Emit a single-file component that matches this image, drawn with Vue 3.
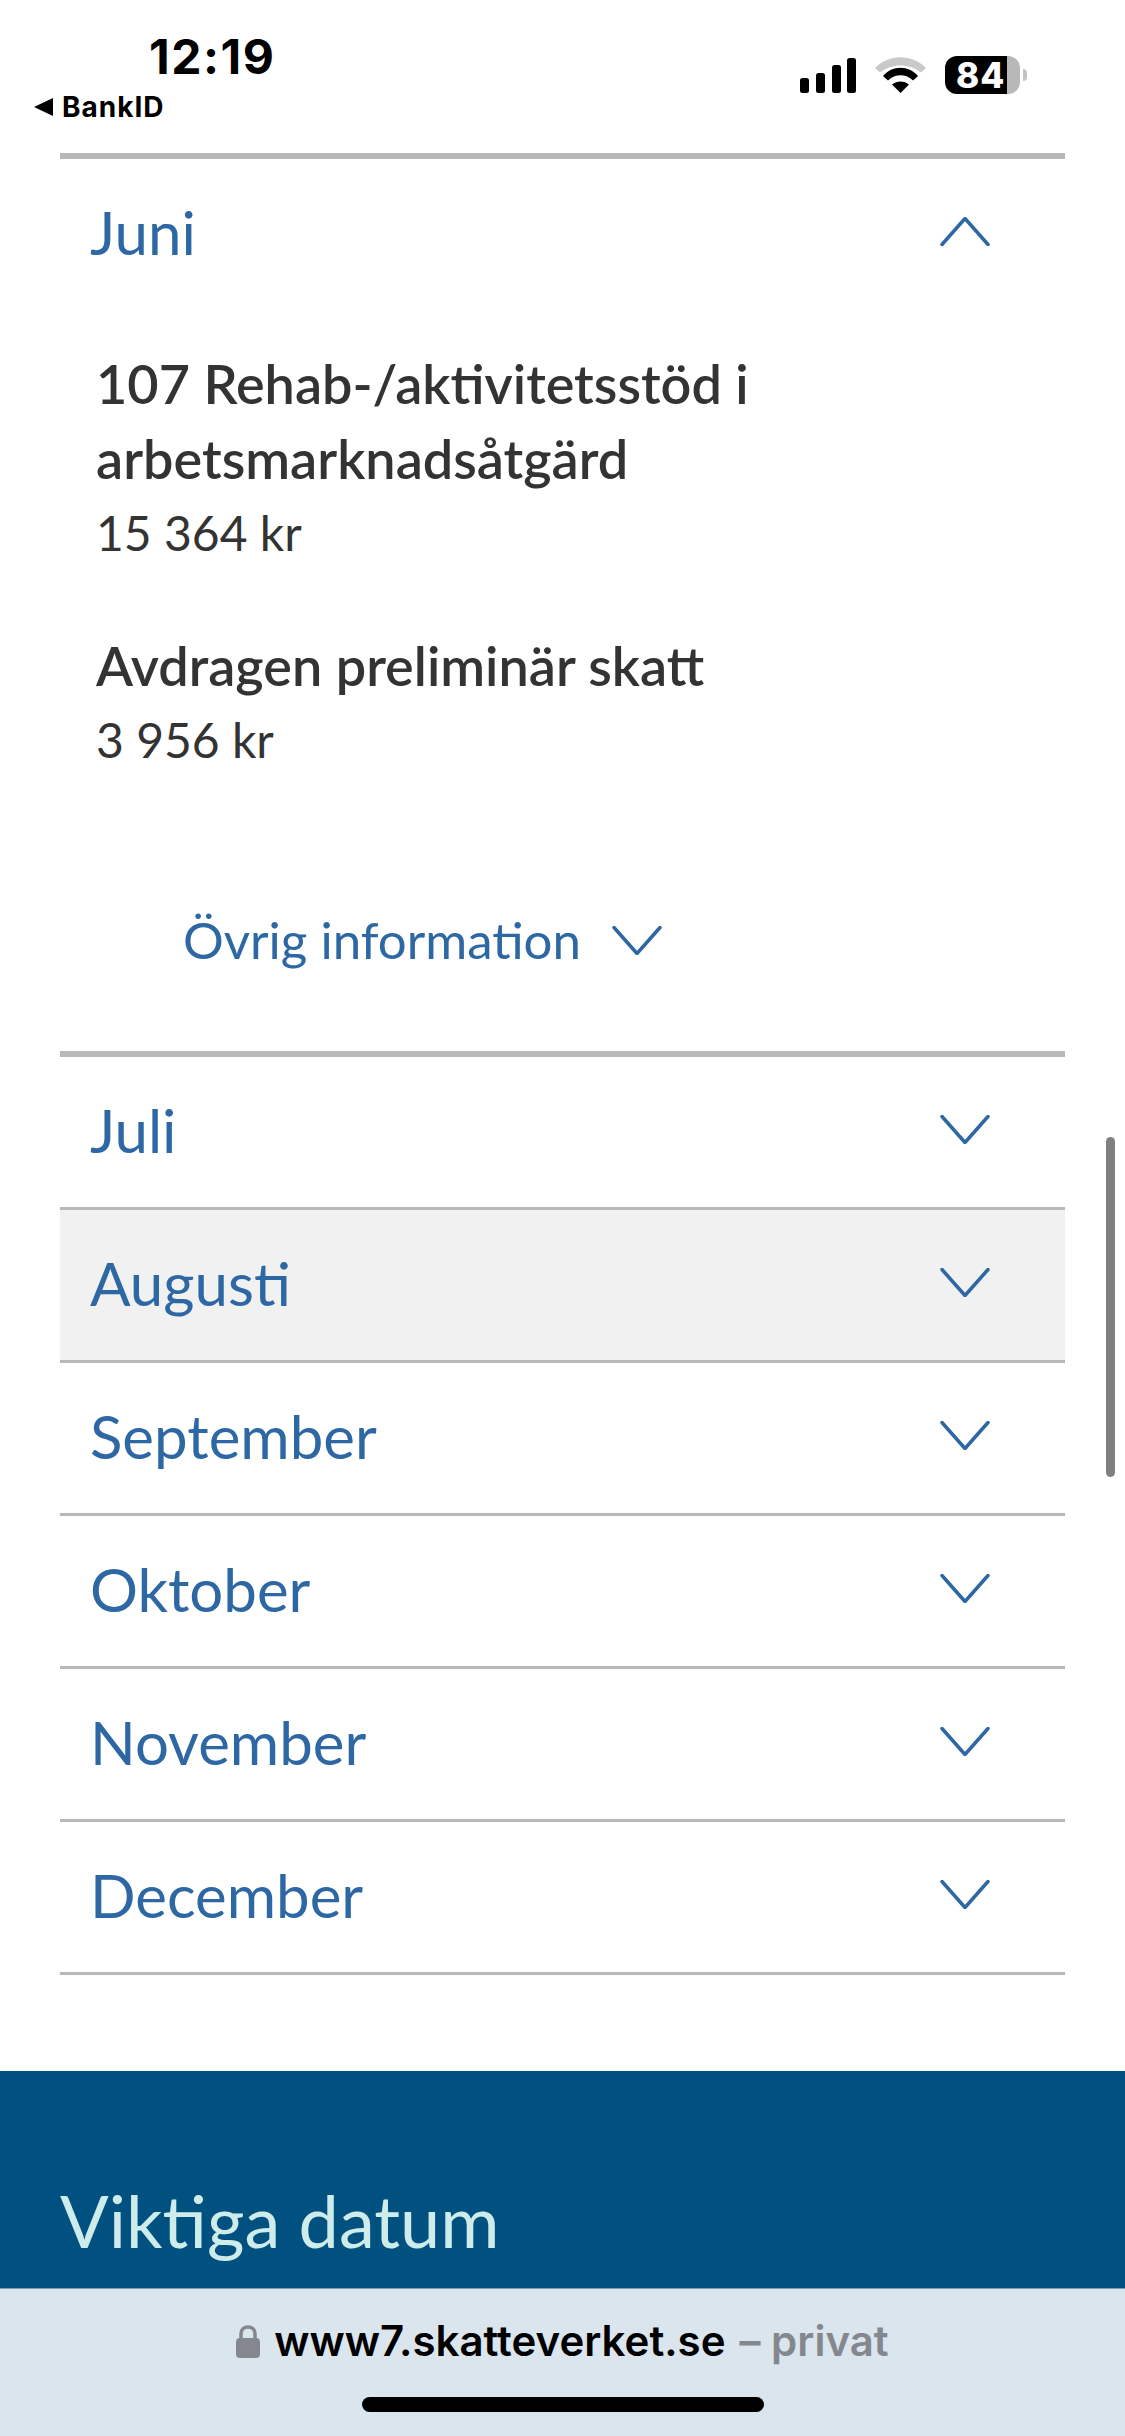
<script setup>
const months = ['Juli', 'Augusti', 'September', 'Oktober', 'November', 'December']
const items = [
  { title: '107 Rehab-/aktivitetsstöd i arbetsmarknadsåtgärd', amount: '15 364 kr' },
  { title: 'Avdragen preliminär skatt', amount: '3 956 kr' },
]
</script>

<template>
  <div class="phone">
    <header class="status">
      <div class="status-left">
        <div class="time">12:19</div>
        <div class="back">
          <svg class="back-arrow" width="19" height="18" viewBox="0 0 19 18"><path d="M19 0V18L0 9Z" fill="#000" /></svg>
          <span>BankID</span>
        </div>
      </div>
      <div class="status-right">
        <svg width="56" height="35" viewBox="0 0 56 35">
          <rect x="0" y="20" width="9" height="15" rx="2.500" fill="#000" />
          <rect x="16" y="15" width="9" height="20" rx="2.500" fill="#000" />
          <rect x="32" y="7" width="9" height="28" rx="2.500" fill="#000" />
          <rect x="47" y="0" width="9" height="35" rx="2.500" fill="#000" />
        </svg>
        <svg class="wifi" width="51" height="36" viewBox="0 0 51 36">
          <path d="M0 11C14 -3.500 37 -3.500 51 11L46 15.500C34 6 17 6 5 15.500Z" fill="#c9c9c9" />
          <path d="M8 19C17 8 34 8 43 19L38 23.500C31 16.500 20 16.500 13 23.500Z" fill="#000" />
          <path d="M17 27.500C22 23.500 29 23.500 34 27.500L25.500 36Z" fill="#000" />
        </svg>
        <div class="battery">
          <div class="battery-body"><span>84</span></div>
          <div class="battery-nub"></div>
        </div>
      </div>
    </header>

    <main class="accordion">
      <section class="open-item">
        <div class="row">
          <span class="month">Juni</span>
          <svg class="chevron" width="50" height="29" viewBox="0 0 50 29"><path d="M2 27.500L25 1.500L48 27.500" /></svg>
        </div>
        <div class="details">
          <div v-for="item in items" :key="item.title" class="detail">
            <div class="detail-title">{{ item.title }}</div>
            <div class="detail-amount">{{ item.amount }}</div>
          </div>
          <div class="more">
            <span>Övrig information</span>
            <svg class="chevron-small" width="50" height="29" viewBox="0 0 50 29"><path d="M2 1.500L25 27.500L48 1.500" /></svg>
          </div>
        </div>
      </section>
      <div v-for="m in months" :key="m" class="row closed" :class="{ hovered: m === 'Augusti' }">
        <span class="month">{{ m }}</span>
        <svg class="chevron" width="50" height="29" viewBox="0 0 50 29"><path d="M2 1.500L25 27.500L48 1.500" /></svg>
      </div>
    </main>

    <footer class="dates">
      <h2>Viktiga datum</h2>
    </footer>

    <div class="scrollbar"></div>

    <div class="browser-bar">
      <div class="url">
        <svg class="lock" width="24" height="33" viewBox="0 0 24 33">
          <path d="M5 15V8.500C5 4.500 8 2 12 2C16 2 19 4.500 19 8.500V15" fill="none" stroke="#84878e" stroke-width="3.500" />
          <rect x="0" y="13" width="24" height="20" rx="4" fill="#84878e" />
        </svg>
        <span class="host">www7.skatteverket.se</span>
        <span class="mode">– privat</span>
      </div>
      <div class="home"></div>
    </div>
  </div>
</template>

<style>
html, body {
  margin: 0;
  background: #fff;
}
</style>

<style scoped>
.phone {
  position: relative;
  width: 1125px;
  height: 2436px;
  overflow: hidden;
  background: #fff;
  font-family: Lato, "Liberation Sans", sans-serif;
  font-feature-settings: "liga" 1;
}

.status {
  height: 153px;
  display: flex;
  justify-content: space-between;
}

.status-left {
  padding-left: 34px;
  font-family: Inter, "Liberation Sans", sans-serif;
  font-weight: 700;
  color: #000;
}

.time {
  margin: 28px 0 0 115px;
  font-size: 48px;
  line-height: 58px;
  letter-spacing: 1.500px;
}

.back {
  display: flex;
  align-items: center;
  gap: 9px;
  margin-top: 5px;
  font-size: 28px;
  font-weight: 700;
  line-height: 32px;
  letter-spacing: 1px;
}

.status-right {
  display: flex;
  align-items: flex-start;
  padding: 58px 98px 0 0;
}

.wifi {
  margin: -1px 0 0 19px;
}

.battery {
  display: flex;
  align-items: center;
  margin: -2px 0 0 19px;
}

.battery-body {
  width: 75px;
  height: 38px;
  box-sizing: border-box;
  padding-left: 11px;
  border-radius: 12px;
  background: linear-gradient(to right, #000 83%, #b8b8b8 83%);
  color: #fff;
  font-family: Inter, "Liberation Sans", sans-serif;
  font-weight: 800;
  font-size: 35px;
  line-height: 38px;
  letter-spacing: 1px;
}

.battery-nub {
  width: 4px;
  height: 12px;
  margin-left: 3px;
  border-radius: 0 6px 6px 0;
  background: #c4c4c4;
}

.accordion {
  margin: 0 60px;
}

.open-item {
  border-top: 6px solid #b8b8b8;
  border-bottom: 6px solid #b8b8b8;
}

.row {
  display: flex;
  justify-content: space-between;
  align-items: center;
  height: 150px;
  padding: 0 75px 4px 30px;
  box-sizing: border-box;
}

.row.closed {
  height: 153px;
  border-bottom: 3px solid #b8b8b8;
}

.row.hovered {
  background: #f1f1f1;
}

.month {
  color: #2e68a4;
  font-size: 60px;
  font-weight: 400;
}

.chevron {
  margin-bottom: 2px;
}

.chevron path,
.chevron-small path {
  fill: none;
  stroke: #2e68a4;
  stroke-width: 3.500;
  stroke-linecap: round;
  stroke-linejoin: round;
}

.details {
  padding: 37px 0 0 36px;
  height: 742px;
  box-sizing: border-box;
  color: #333;
}

.detail {
  margin-bottom: 62px;
}

.detail-title {
  font-size: 54px;
  font-weight: 600;
  line-height: 75px;
  max-width: 800px;
}

.detail-amount {
  margin-top: 4px;
  font-size: 48px;
  line-height: 66px;
}

.more {
  display: flex;
  align-items: center;
  gap: 31px;
  margin-top: 134px;
  padding-left: 87px;
  color: #2e68a4;
  font-size: 51px;
  line-height: 66px;
}

.dates {
  margin-top: 96px;
  height: 400px;
  padding: 104px 60px 0;
  box-sizing: border-box;
  background: #00517f;
}

.dates h2 {
  margin: 0;
  color: #cdecea;
  font-size: 72px;
  font-weight: 400;
  line-height: 90px;
}

.scrollbar {
  position: absolute;
  left: 1106px;
  top: 1137px;
  width: 9px;
  height: 340px;
  border-radius: 5px;
  background: #808080;
}

.browser-bar {
  position: absolute;
  left: 0;
  right: 0;
  bottom: 0;
  height: 147px;
  border-top: 1px solid #7e99b0;
  background: #dbe5ed;
}

.url {
  display: flex;
  align-items: center;
  justify-content: center;
  gap: 14px;
  margin-top: 27px;
  font-family: Inter, "Liberation Sans", sans-serif;
  font-size: 42px;
  font-weight: 600;
  line-height: 50px;
}

.host {
  color: #000;
}

.mode {
  color: #84878e;
}

.home {
  width: 402px;
  height: 15px;
  margin: 31px auto 0;
  border-radius: 8px;
  background: #000;
}
</style>
